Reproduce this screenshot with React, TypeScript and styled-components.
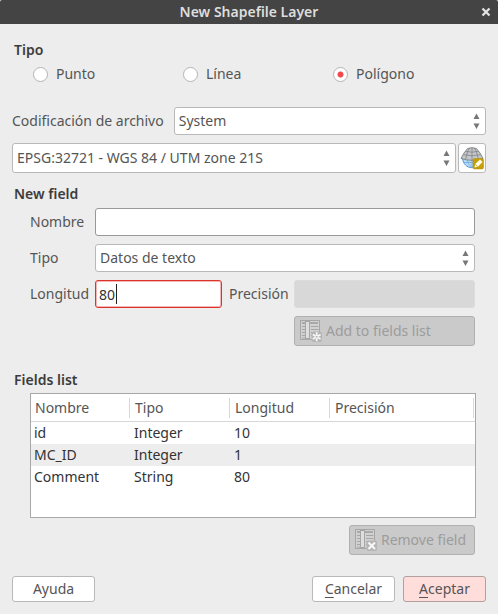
import React, { useState } from "react";
import styled, { createGlobalStyle, css } from "styled-components";

const GlobalStyle = createGlobalStyle`
  *, *::before, *::after { box-sizing: border-box; }
  html, body { margin: 0; background: #ededed; }
  body, button, input, select, table {
    font-family: "Noto Sans", "Open Sans", sans-serif;
    font-size: 14px;
    line-height: 20px;
    color: #555555;
  }
`;

const Dialog = styled.main`
  min-height: 100vh;
  display: flex;
  flex-direction: column;
  background: #ededed;
`;

const TitleBar = styled.header`
  display: grid;
  grid-template-columns: 24px 1fr 24px;
  align-items: center;
  height: 24px;
  background: #444444;
  border-radius: 2px 2px 0 0;
`;

const Title = styled.h1`
  grid-column: 2;
  margin: 0;
  font-size: 14px;
  font-weight: 600;
  line-height: 24px;
  text-align: center;
  color: #dddddd;
`;

const CloseButton = styled.button`
  display: grid;
  place-items: center;
  height: 24px;
  padding: 0;
  border: 0;
  background: none;
`;

const Content = styled.form`
  flex: 1;
  display: flex;
  flex-direction: column;
  padding: 16px 12px 12px;
`;

const Group = styled.section`
  margin-bottom: ${(p: { $gap: number }) => p.$gap}px;
`;

const Heading = styled.h2<{ $tight?: boolean }>`
  margin: 0 2px ${(p) => (p.$tight ? 3 : 4)}px;
  font-size: 14px;
  font-weight: 600;
  line-height: 20px;
  color: #3c3c3c;
`;

const RadioRow = styled.div`
  display: flex;
  padding: 0 0 0 21px;
`;

const RadioLabel = styled.label`
  display: flex;
  align-items: center;
  gap: 8px;
  flex: 0 1 150px;
`;

const Radio = styled.input`
  appearance: none;
  width: 15px;
  height: 15px;
  margin: 0;
  border: 1px solid #b4b4b4;
  border-radius: 50%;
  background: #ffffff;
  &:checked {
    background: radial-gradient(circle, #f04a4a 0 2.6px, #ffffff 3.4px);
  }
`;

const Line = styled.div`
  display: flex;
  align-items: center;
  gap: ${(p: { $gap: number; $after?: number }) => p.$gap}px;
  margin-bottom: ${(p) => p.$after ?? 0}px;
`;

const EncodingLabel = styled.label`
  white-space: nowrap;
`;

const SelectFrame = styled.div`
  flex: 1;
  min-width: 0;
  display: grid;
  grid-template-columns: 1fr 20px;
  align-items: center;
`;

const Select = styled.select<{ $tall?: boolean }>`
  grid-area: 1 / 1 / 2 / 3;
  appearance: none;
  width: 100%;
  height: ${(p) => (p.$tall ? 30 : 28)}px;
  padding: 0 20px 0 4px;
  border: 1px solid #b9b9b9;
  border-radius: 3px;
  background: #ffffff;
  outline: none;
`;

const ArrowsSvg = styled.svg`
  grid-area: 1 / 2 / 2 / 3;
  pointer-events: none;
`;

const IconButton = styled.button`
  display: grid;
  place-items: center;
  width: 28px;
  height: 30px;
  padding: 0;
  border: 1px solid #b9b9b9;
  border-radius: 3px;
  background: #ffffff;
`;

const FieldGrid = styled.div`
  display: grid;
  grid-template-columns: 65px minmax(0, 127fr) 72px minmax(0, 181fr);
  row-gap: 8px;
  align-items: center;
  margin: 0 11px 0 18px;
`;

const WideCell = styled.div`
  grid-column: 2 / 5;
  display: flex;
`;

const FieldLabel = styled.label<{ $inset?: boolean }>`
  padding-left: ${(p) => (p.$inset ? 7 : 0)}px;
`;

const TextInput = styled.input<{ $active?: boolean }>`
  width: 100%;
  height: 28px;
  padding: 0 4px;
  border: 1px solid #999999;
  border-radius: 3px;
  background: #ffffff;
  color: #333333;
  outline: none;
  ${(p) =>
    p.$active &&
    css`
      padding: 0 3px;
      border-color: #dc342c;
      box-shadow: inset 0 0 0 1px #f5b5b2;
      caret-color: transparent;
    `}
  &:disabled {
    border-color: #dcdcdc;
    background: #d8d8d8;
  }
`;

const CaretFrame = styled.div`
  position: relative;
  display: flex;
`;

const Caret = styled.span`
  position: absolute;
  left: 21px;
  top: 4px;
  width: 1px;
  height: 20px;
  background: #222222;
`;

const ListButton = styled.button<{ $fill?: boolean }>`
  display: flex;
  align-items: center;
  gap: 4px;
  height: 30px;
  padding: 0 8px 0 5px;
  border: 1px solid #b0b0b0;
  border-radius: 3px;
  background: #cacaca;
  color: #9c9c9c;
  white-space: nowrap;
  ${(p) => p.$fill && "grid-column: 4;"}
`;

const TableFrame = styled.div`
  height: 125px;
  margin: 0 10px 7px 18px;
  border: 1px solid #a8a8a8;
  background: #ffffff;
`;

const Table = styled.table`
  width: 100%;
  border-collapse: collapse;
  table-layout: fixed;
`;

const HeadRow = styled.tr`
  height: 28px;
  background: linear-gradient(#d8d8d8, #d8d8d8) bottom / 100% 1px no-repeat;
`;

const Th = styled.th`
  width: ${(p: { $w?: number }) => (p.$w ? `${p.$w}px` : "auto")};
  padding: 0 5px;
  font-weight: 400;
  text-align: left;
  background: linear-gradient(#d8d8d8, #d8d8d8) right center / 1px 20px no-repeat;
  &:first-child { padding-left: 4px; }
  &:last-child { background-position: right 1px center; }
`;

const Tr = styled.tr`
  height: 22px;
  color: #333333;
  &:nth-child(even) { background: #ededed; }
`;

const Td = styled.td`
  padding: 0 4px;
  &:first-child { padding-left: 3px; }
`;

const RemoveLine = styled.div`
  display: flex;
  justify-content: flex-end;
  margin-right: 11px;
`;

const Footer = styled.footer`
  display: flex;
  gap: 8px;
  margin-top: auto;
`;

const PushButton = styled.button<{ $primary?: boolean; $first?: boolean }>`
  width: 83px;
  height: 26px;
  padding: 0;
  border: 1px solid ${(p) => (p.$primary ? "#b0a0a0" : "#b9b9b9")};
  border-radius: 3px;
  background: ${(p) => (p.$primary ? "#ffdddb" : "#ffffff")};
  ${(p) => p.$first && "margin-right: auto;"}
`;

const Mnemonic = styled.span`
  text-decoration: underline;
  text-underline-offset: 3px;
  text-decoration-thickness: 1px;
  text-decoration-skip-ink: none;
`;

const Arrows = () => (
  <ArrowsSvg width="20" height="18" viewBox="0 0 20 18" aria-hidden="true">
    <path d="M7.5 7 10.5 1.5 13.5 7ZM7.5 11.5h6L10.5 17Z" fill="#777777" />
  </ArrowsSvg>
);

const GlobeIcon = () => (
  <svg width="24" height="24" viewBox="0 0 24 24" aria-hidden="true">
    <path d="M2.5 12C3 18 7 21.7 12 21.7S21 18 21.5 12Z" fill="#b5dcfa" stroke="#5595cd" />
    <path d="M7 12c.3 4 2 7.5 5 9.5M12 12v9.5M17 12c-.3 4-2 7.5-5 9.5M4 16.5h16" fill="none" stroke="#6eaade" strokeWidth=".8" />
    <path d="M7.5 2.5Q12 .8 16.5 2.5L20 7l3 5.5q-5.5 1.8-11 1.8T1 12.5L4 7Z" fill="#c5c6c8" stroke="#7d8084" strokeWidth=".9" />
    <path d="M5.5 5.3q6.5 1.8 13 0M3.5 8.7q8.5 2.2 17 0M9.5 2 7.5 6 5.5 13.7M12 1.7v12.6M14.5 2l2 4 2 7.7" fill="none" stroke="#808388" strokeWidth=".8" />
    <rect x="13" y="12.5" width="10.5" height="10.5" rx="1.5" fill="#c69f08" stroke="#b38d00" strokeWidth=".5" />
    <path d="m14.500 21.500 1-3.700 4.500-4.300 2.500 2.500-4.300 4.500Z" fill="#fffbe6" />
    <path d="m15.300 18.300 2.300 2.300" stroke="#c69f08" strokeWidth=".8" />
  </svg>
);

const TableIcon = ({ badge }: { badge: "new" | "delete" }) => (
  <svg width="22" height="22" viewBox="0 0 22 22" aria-hidden="true">
    <rect x=".5" y=".5" width="19" height="19" fill="#d1d1d1" stroke="#a6a6a6" />
    <path d="M2 3h16" stroke="#a9a9a9" strokeWidth="2" />
    <path d="M2 6.5h3.5M2 9.5h3.5M2 12.5h3.5M2 15.5h3.5M2 18h3.5M11 6.5h7.5M11 9.5h7.5M11 12.5h7.5M11 15.5h3" stroke="#a6a6a6" />
    <rect x="5.5" y="1.5" width="4" height="17" fill="#dedede" stroke="#a6a6a6" />
    <rect x="11.5" y="11.5" width="10.5" height="10.5" rx="2" fill="#b5b5b5" />
    {badge === "new" ? (
      <>
        <path d="M16.7 12.3v9M12.8 14.6l7.8 4.400M12.800 19l7.800-4.400" stroke="#f7f7f7" strokeWidth="1.7" />
        <circle cx="16.7" cy="16.8" r="1" fill="#b5b5b5" />
      </>
    ) : (
      <path d="m13.5 13.5 6.500 6.500m0-6.500L13.500 20" stroke="#f7f7f7" strokeWidth="2.2" />
    )}
  </svg>
);

const geometryTypes = ["Punto", "Línea", "Polígono"];
const fields = [
  ["id", "Integer", "10", ""],
  ["MC_ID", "Integer", "1", ""],
  ["Comment", "String", "80", ""],
];

export default function App() {
  const [geometry, setGeometry] = useState("Polígono");
  const [length, setLength] = useState("80");

  return (
    <>
      <GlobalStyle />
      <Dialog>
        <TitleBar>
          <Title>New Shapefile Layer</Title>
          <CloseButton type="button" aria-label="Close">
            <svg width="10" height="10" viewBox="0 0 10 10" aria-hidden="true">
              <path d="m1.5 1.5 7 7m0-7-7 7" stroke="#e2e2e2" strokeWidth="2.3" />
            </svg>
          </CloseButton>
        </TitleBar>
        <Content onSubmit={(e) => e.preventDefault()}>
          <Group $gap={23}>
            <Heading>Tipo</Heading>
            <RadioRow>
              {geometryTypes.map((name) => (
                <RadioLabel key={name}>
                  <Radio
                    type="radio"
                    name="geometry"
                    checked={geometry === name}
                    onChange={() => setGeometry(name)}
                  />
                  {name}
                </RadioLabel>
              ))}
            </RadioRow>
          </Group>

          <Line $gap={10} $after={8}>
            <EncodingLabel htmlFor="encoding">Codificación de archivo</EncodingLabel>
            <SelectFrame>
              <Select id="encoding">
                <option>System</option>
              </Select>
              <Arrows />
            </SelectFrame>
          </Line>
          <Line $gap={2} $after={11}>
            <SelectFrame>
              <Select $tall aria-label="CRS">
                <option>EPSG:32721 - WGS 84 / UTM zone 21S</option>
              </Select>
              <Arrows />
            </SelectFrame>
            <IconButton type="button" aria-label="Select CRS">
              <GlobeIcon />
            </IconButton>
          </Line>

          <Group $gap={24}>
            <Heading>New field</Heading>
            <FieldGrid>
              <FieldLabel htmlFor="name">Nombre</FieldLabel>
              <WideCell>
                <TextInput id="name" type="text" />
              </WideCell>
              <FieldLabel htmlFor="type">Tipo</FieldLabel>
              <WideCell>
                <SelectFrame>
                  <Select id="type">
                    <option>Datos de texto</option>
                  </Select>
                  <Arrows />
                </SelectFrame>
              </WideCell>
              <FieldLabel htmlFor="length">Longitud</FieldLabel>
              <CaretFrame>
                <TextInput
                  id="length"
                  type="text"
                  $active
                  value={length}
                  onChange={(e) => setLength(e.target.value)}
                />
                <Caret />
              </CaretFrame>
              <FieldLabel htmlFor="precision" $inset>
                Precisión
              </FieldLabel>
              <TextInput id="precision" type="text" disabled />
              <ListButton type="button" disabled $fill>
                <TableIcon badge="new" />
                Add to fields list
              </ListButton>
            </FieldGrid>
          </Group>

          <Group $gap={21}>
            <Heading $tight>Fields list</Heading>
            <TableFrame>
              <Table>
                <thead>
                  <HeadRow>
                    <Th $w={99}>Nombre</Th>
                    <Th $w={100}>Tipo</Th>
                    <Th $w={100}>Longitud</Th>
                    <Th>Precisión</Th>
                  </HeadRow>
                </thead>
                <tbody>
                  {fields.map((row) => (
                    <Tr key={row[0]}>
                      {row.map((cell, i) => (
                        <Td key={i}>{cell}</Td>
                      ))}
                    </Tr>
                  ))}
                </tbody>
              </Table>
            </TableFrame>
            <RemoveLine>
              <ListButton type="button" disabled>
                <TableIcon badge="delete" />
                Remove field
              </ListButton>
            </RemoveLine>
          </Group>

          <Footer>
            <PushButton type="button" $first>
              Ayuda
            </PushButton>
            <PushButton type="button">
              <Mnemonic>C</Mnemonic>ancelar
            </PushButton>
            <PushButton type="submit" $primary>
              <Mnemonic>A</Mnemonic>ceptar
            </PushButton>
          </Footer>
        </Content>
      </Dialog>
    </>
  );
}
